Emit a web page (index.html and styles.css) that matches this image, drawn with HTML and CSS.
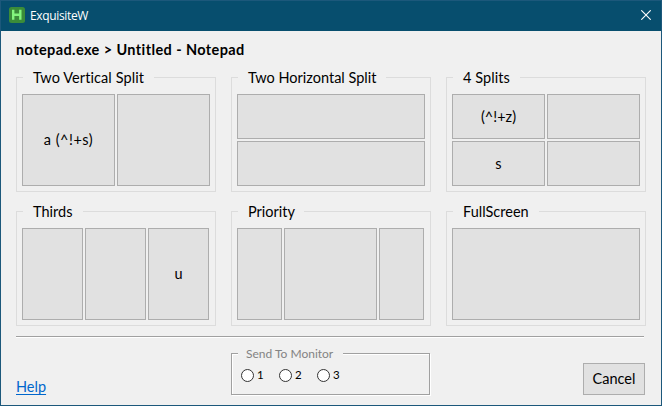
FILE: index.html
```html
<!DOCTYPE html>
<html lang="en">
<head>
<meta charset="utf-8">
<title>ExquisiteW</title>
<link rel="stylesheet" href="styles.css">
</head>
<body>
<div class="window">
  <header class="titlebar">
    <svg class="logo" width="16" height="16" viewBox="0 0 16 16"><rect width="16" height="16" rx="2.5" fill="#3b8c39"/><path d="M4.2 2.8v10M11.3 2.8v10M4.2 7.8h7" fill="none" stroke="#83f57d" stroke-width="2.4"/></svg>
    <span class="app-name">ExquisiteW</span>
    <svg class="close" width="10" height="10" viewBox="0 0 10 10"><path d="M.3.3l9.4 9.4M9.7.3L.3 9.7" stroke="#fff" stroke-width="1.1"/></svg>
  </header>
  <main class="content">
    <h1 class="heading"><span>notepad.exe &gt; Untitled - Notepad</span></h1>
    <div class="groups">
      <section class="group">
        <h2 class="legend legend-vertical"><span>Two Vertical Split</span></h2>
        <div class="zones halves"><button class="hotkey">a (^!+s)</button><button></button></div>
      </section>
      <section class="group">
        <h2 class="legend legend-horizontal"><span>Two Horizontal Split</span></h2>
        <div class="zones rows"><button></button><button></button></div>
      </section>
      <section class="group">
        <h2 class="legend legend-four"><span>4 Splits</span></h2>
        <div class="zones halves"><button>(^!+z)</button><button></button><button>s</button><button></button></div>
      </section>
      <section class="group">
        <h2 class="legend legend-thirds"><span>Thirds</span></h2>
        <div class="zones thirds"><button></button><button></button><button>u</button></div>
      </section>
      <section class="group">
        <h2 class="legend legend-priority"><span>Priority</span></h2>
        <div class="zones priority"><button></button><button></button><button></button></div>
      </section>
      <section class="group">
        <h2 class="legend legend-full"><span>FullScreen</span></h2>
        <div class="zones"><button></button></div>
      </section>
    </div>
    <div class="separator"></div>
    <footer class="footer">
      <a class="help">Help</a>
      <section class="monitors">
        <h2 class="monitor-legend"><span>Send To Monitor</span></h2>
        <div class="radios">
          <label><i class="radio"></i>1</label>
          <label><i class="radio"></i>2</label>
          <label><i class="radio"></i>3</label>
        </div>
      </section>
      <button class="cancel">Cancel</button>
    </footer>
  </main>
</div>
</body>
</html>
```
FILE: styles.css
```css
* { box-sizing: border-box; }
body { margin: 0; font: 14.5px/20px Lato, "Liberation Sans", sans-serif; color: #000; }
h1, h2 { margin: 0; font: inherit; }
.window { width: 662px; height: 406px; border: 1px solid #1c587b; background: #f0f0f0; overflow: hidden; }
.titlebar { display: flex; align-items: center; height: 30px; padding: 0 10px 0 8px; background: #074e6e; color: #fff; }
.logo { position: relative; top: -1px; }
.app-name { margin-left: 5px; font: 12px/16px "Open Sans", sans-serif; letter-spacing: -0.35px; }
.close { position: relative; top: -1px; margin-left: auto; }
.content { padding: 0 15px; }
.heading { height: 46px; padding-top: 9px; font-weight: 700; letter-spacing: 0.4px; white-space: nowrap; }
.groups { display: grid; grid-template-columns: repeat(3, 200px); grid-auto-rows: 115px; column-gap: 15px; row-gap: 19px; }
.group { border: 1px solid #dcdcdc; padding: 0 5px; }
.legend { height: 20px; margin: -10px 0 6px 1px; padding-left: 10px; background: #f0f0f0; white-space: nowrap; }
.legend-vertical { width: 131px; letter-spacing: 0.08px; }
.legend-horizontal { width: 148px; }
.legend-four { width: 67px; letter-spacing: 0.08px; }
.legend-thirds { width: 60px; }
.legend-priority { width: 66px; }
.legend-full { width: 86px; }
.zones { display: grid; gap: 2px; height: 92px; width: 188px; }
.halves { grid-template-columns: 93px 93px; }
.rows { grid-template-rows: 45px 45px; }
.thirds { grid-template-columns: repeat(3, 61px); }
.priority { grid-template-columns: 45px 93px 45px; }
button { font: inherit; color: #000; padding: 0; border: 1px solid #adadad; border-radius: 0; background: #e1e1e1; }
.hotkey { letter-spacing: 0.5px; }
.separator { width: 628px; height: 2px; margin-top: 10px; border-top: 1px solid #a0a0a0; border-bottom: 1px solid #fff; }
.footer { display: flex; }
.help { width: 215px; padding-top: 39px; color: #0066cc; text-decoration: underline; text-underline-offset: 2px; }
.monitors { width: 199px; height: 42px; margin-top: 15px; border: 1px solid #a0a0a0; box-shadow: 1px 1px #fff, inset 1px 1px #fff; }
.monitor-legend { width: 105px; height: 14px; margin: -7px 0 0 6px; padding-left: 8px; background: #f0f0f0; color: #838383; font-size: 12px; line-height: 14px; white-space: nowrap; }
.radios { display: flex; padding: 8px 0 0 9px; font-size: 11.5px; line-height: 12px; }
.radios label { display: flex; width: 38px; gap: 3px; }
.radio { width: 13px; height: 13px; border: 1px solid #333; border-radius: 50%; background: #fff; }
.cancel { width: 62px; height: 32px; margin: 25px 0 0 153px; }
```
